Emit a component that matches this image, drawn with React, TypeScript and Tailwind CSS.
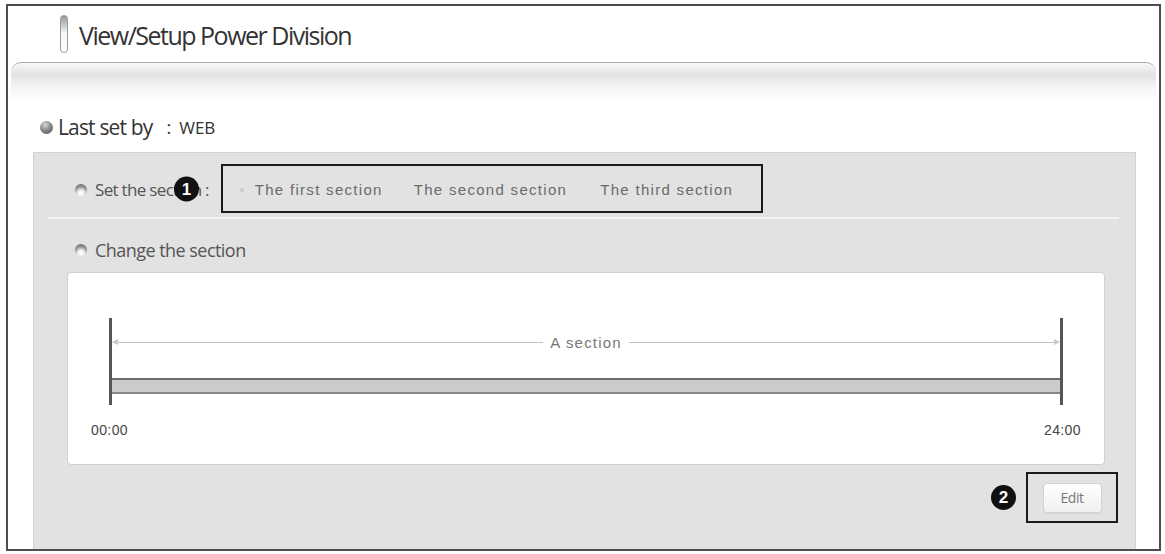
import React from "react";

const Bullet = ({ dark }: { dark?: boolean }) =>
  dark ? (
    <span className="inline-block w-[13px] h-[13px] rounded-full bg-[radial-gradient(circle_at_40%_30%,#d8d8d8_0%,#8a8a8a_45%,#4a4a4a_100%)] shrink-0" />
  ) : (
    <span className="inline-block w-[12px] h-[12px] rounded-full bg-[radial-gradient(circle_at_50%_78%,#ffffff_0%,#f0f0f0_28%,#8e8e8e_62%,#606060_100%)] shrink-0" />
  );

const Circled = ({ n }: { n: string }) => (
  <span className="inline-flex items-center justify-center w-[25px] h-[25px] rounded-full bg-[#111] text-white text-[17px] font-bold leading-none font-['Liberation_Sans',sans-serif]">
    {n}
  </span>
);

export default function App() {
  return (
    <div className="w-[1165px] h-[554px] bg-white pt-[4px] pl-[6px] font-['Open_Sans',sans-serif]">
      <div className="w-[1155px] h-[547px] border-2 border-[#4d4d4d] flex flex-col overflow-hidden">
        {/* Header */}
        <div className="h-[56px] flex items-center pl-[52px] bg-white">
          <span className="w-[8px] h-[38px] rounded-full border border-[#9a9a9a] bg-[linear-gradient(to_bottom,#9a9a9a_0%,#c8c8c8_25%,#f4f4f4_45%,#ffffff_100%)]" />
          <span className="ml-[11px] mt-[3px] text-[25px] tracking-[-0.06em] text-[#333] leading-none font-['Open_Sans',sans-serif]">
            View/Setup Power Division
          </span>
        </div>
        {/* band */}
        <div className="mx-[3px] h-[40px] rounded-t-[10px] border-t border-[#a9a9a9] bg-[linear-gradient(to_bottom,#f8f8f8_0%,#e3e3e3_30%,#f6f6f6_65%,#ffffff_100%)]" />
        {/* Last set by */}
        <div className="h-[50px] flex items-center pl-[32px] gap-[5px]">
          <Bullet dark />
          <span className="text-[21px] tracking-[-0.04em] text-[#333] leading-none">
            Last set by
          </span>
          <span className="ml-[9px] text-[18px] text-[#333] leading-none">:</span>
          <span className="ml-[3px] text-[17px] tracking-[0em] text-[#333] leading-none">WEB</span>
        </div>
        {/* Panel */}
        <div className="flex-1 ml-[25px] mr-[23px] bg-[#e2e2e2] border-t border-l border-r border-[#d2d2d2] flex flex-col pt-[11px]">
          {/* Set the section row */}
          <div className="flex items-center pl-[41px] h-[49px]">
            <div className="relative w-[146px] flex items-center gap-[8px] pt-[2px]">
              <Bullet />
              <span className="text-[17px] tracking-[-0.04em] text-[#555] leading-none">
                Set the section :
              </span>
              <span className="absolute left-[99px] top-1/2 -translate-y-1/2">
                <Circled n="1" />
              </span>
            </div>
            <div className="w-[542px] h-[49px] border-2 border-[#1a1a1a] flex items-center pl-[16px] pt-[4px] font-['Liberation_Sans',sans-serif] text-[15px] tracking-[1.3px] text-[#6a6a6a]">
              <span className="text-[#c8c8c8] text-[9px] mr-[9px]">●</span>
              <span>The first section</span>
              <span className="ml-[31px]">The second section</span>
              <span className="ml-[33px]">The third section</span>
            </div>
          </div>
          {/* separator */}
          <div className="mt-[4px] ml-[14px] mr-[16px] h-[2px] bg-[#f3f3f3]" />
          {/* Change the section */}
          <div className="mt-[20px] flex items-center pl-[41px] gap-[8px] h-[22px]">
            <Bullet />
            <span className="text-[18px] tracking-[-0.03em] text-[#555] leading-none">
              Change the section
            </span>
          </div>
          {/* Card */}
          <div className="mt-[11px] ml-[33px] mr-[30px] h-[193px] bg-white border border-[#d0d0d0] rounded-[4px] pt-[45px] px-[41px]">
            <div className="flex items-stretch h-[87px]">
              <div className="w-[3px] bg-[#555]" />
              <div className="flex-1 flex flex-col">
                <div className="mt-[21px] relative flex items-center h-[6px]">
                  <span className="w-0 h-0 border-y-[3px] border-y-transparent border-r-[6px] border-r-[#c8c8c8]" />
                  <div className="flex-1 h-px bg-[#c2c2c2]" />
                  <span className="px-[7px] bg-white text-[15px] tracking-[1.2px] text-[#777] font-['Liberation_Sans',sans-serif] leading-none">
                    A section
                  </span>
                  <div className="flex-1 h-px bg-[#c2c2c2]" />
                  <span className="w-0 h-0 border-y-[3px] border-y-transparent border-l-[6px] border-l-[#c8c8c8]" />
                </div>
                <div className="mt-[33px] h-[16px] bg-[#cbcbcb] border-t-2 border-b-2 border-t-[#6c6c6c] border-b-[#888]" />
              </div>
              <div className="w-[3px] bg-[#555]" />
            </div>
            <div className="mt-[18px] -mx-[18px] flex justify-between text-[14px] tracking-[0.4px] text-[#444] font-['Liberation_Sans',sans-serif] leading-none">
              <span>00:00</span>
              <span>24:00</span>
            </div>
          </div>
          {/* Edit row */}
          <div className="mt-[7px] flex justify-end items-center mr-[17px]">
            <Circled n="2" />
            <div className="ml-[10px] w-[92px] h-[51px] border-2 border-[#1a1a1a] flex items-center justify-center">
              <button className="w-[59px] h-[30px] rounded-[4px] border border-[#d4d4d4] bg-[linear-gradient(to_bottom,#ffffff,#f0f0f0)] text-[14px] tracking-[-0.03em] text-[#777] shadow-[0_1px_1px_rgba(0,0,0,0.08)]">
                Edit
              </button>
            </div>
          </div>
        </div>
      </div>
    </div>
  );
}
